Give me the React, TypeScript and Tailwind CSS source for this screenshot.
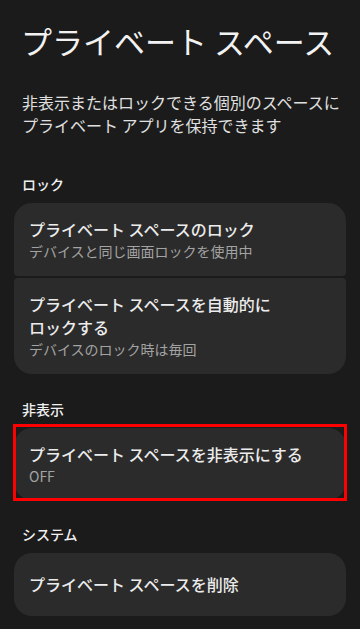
import React from "react";

type Row = { title: React.ReactNode; sub?: string };

const Card = ({ row, shape, pad = "py-[15px]" }: { row: Row; shape: string; pad?: string }) => (
  <div className={`bg-[#2b2b2b] px-[15px] ${pad} ${shape}`}>
    <div className="text-[16px] leading-[23px] font-medium text-[#ececec]">{row.title}</div>
    {row.sub && <div className="text-[14px] leading-5 text-[#a3a3a3]">{row.sub}</div>}
  </div>
);

const Label = ({ children }: { children: React.ReactNode }) => (
  <div className="px-[22px] text-[14px] leading-5 font-medium text-[#f0f0f0]">{children}</div>
);

export default function App() {
  return (
    <div
      className="w-[360px] h-[629px] overflow-hidden bg-[#1b1b1b] text-white"
      style={{ fontFamily: '"Noto Sans CJK JP", "Noto Sans", sans-serif' }}
    >
      {/* Header */}
      <h1 className="pt-[21px] px-[21px] text-[31px] leading-[40px] font-normal text-[#f2f2f2]">
        プライベート スペース
      </h1>
      <p className="mt-[30px] pl-[22px] pr-[14px] text-[16px] leading-[23px] text-[#e0e0e0]">
        非表示またはロックできる個別のスペースに
        <br />
        プライベート アプリを保持できます
      </p>

      {/* ロック */}
      <div className="mt-[37px]">
        <Label>ロック</Label>
        <div className="mx-[14px] mt-[9px] flex flex-col gap-[2px]">
          <Card
            row={{ title: "プライベート スペースのロック", sub: "デバイスと同じ画面ロックを使用中" }}
            shape="rounded-t-[18px] rounded-b-[4px]"
          />
          <Card
            row={{
              title: (
                <>
                  プライベート スペースを自動的に
                  <br />
                  ロックする
                </>
              ),
              sub: "デバイスのロック時は毎回",
            }}
            shape="rounded-t-[4px] rounded-b-[18px]"
          />
        </div>
      </div>

      {/* 非表示 */}
      <div className="mt-[25px]">
        <Label>非表示</Label>
        <div className="relative mx-[14px] mt-[9px]">
          <Card
            row={{ title: "プライベート スペースを非表示にする", sub: "OFF" }}
            shape="rounded-[18px]"
            pad="pt-[15px] pb-[14px]"
          />
          <div className="absolute -top-[4px] -bottom-[1px] -left-[1px] -right-[1px] border-[3px] border-[#ff0000]" />
        </div>
      </div>

      {/* システム */}
      <div className="mt-[24px]">
        <Label>システム</Label>
        <div className="mx-[14px] mt-[9px]">
          <Card row={{ title: "プライベート スペースを削除" }} shape="rounded-[18px]" pad="py-5" />
        </div>
      </div>
    </div>
  );
}
